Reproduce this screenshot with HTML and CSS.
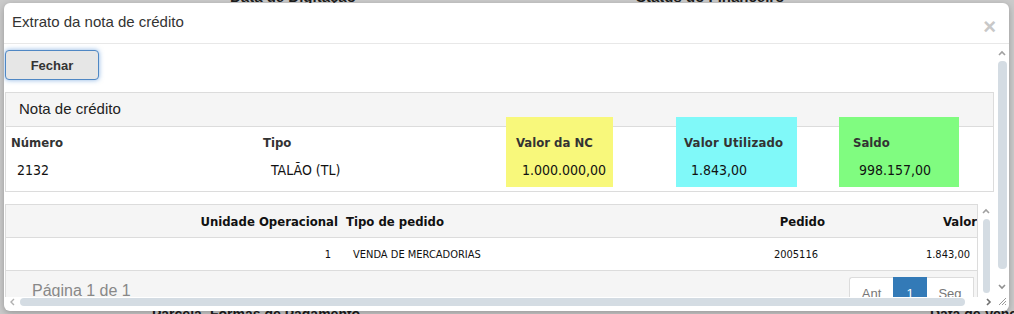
FILE: index.html
```html
<!DOCTYPE html>
<html lang="pt-BR">
<head>
  <meta charset="UTF-8">
  <title>Extrato da nota de crédito</title>
  <link rel="stylesheet" href="styles.css">
</head>
<body>

  <div class="page">
    <div class="page-top">
      <span class="pt-a">Data de Digitação</span>
      <span class="pt-b">Status do Financeiro</span>
    </div>
    <div class="page-bottom">
      <span class="pb-a">Parcela</span>
      <span class="pb-b">Formas de Pagamento</span>
      <span class="pb-c">Data de Venc.</span>
    </div>
  </div>

  <div class="modal">
    <div class="modal-header">
      <span class="modal-title">Extrato da nota de crédito</span>
      <span class="close">&times;</span>
    </div>

    <div class="modal-body">
      <div class="scroll-area">
        <button class="btn-fechar">Fechar</button>

        <div class="panel">
          <div class="panel-heading">Nota de crédito</div>
          <div class="panel-body">
            <div class="field f-numero">
              <div class="label">Número</div>
              <div class="value">2132</div>
            </div>
            <div class="field f-tipo">
              <div class="label">Tipo</div>
              <div class="value">TALÃO (TL)</div>
            </div>
            <div class="field box box-yellow">
              <div class="label">Valor da NC</div>
              <div class="value">1.000.000,00</div>
            </div>
            <div class="field box box-cyan">
              <div class="label">Valor Utilizado</div>
              <div class="value">1.843,00</div>
            </div>
            <div class="field box box-green">
              <div class="label">Saldo</div>
              <div class="value">998.157,00</div>
            </div>
          </div>
        </div>

        <div class="grid-wrap">
          <div class="grid">
            <div class="row head">
              <div class="c1">Unidade Operacional</div>
              <div class="c2">Tipo de pedido</div>
              <div class="c3">Pedido</div>
              <div class="c4">Valor</div>
            </div>
            <div class="row data">
              <div class="c1">1</div>
              <div class="c2">VENDA DE MERCADORIAS</div>
              <div class="c3">2005116</div>
              <div class="c4">1.843,00</div>
            </div>
            <div class="row foot">
              <span class="paging-info">Página 1 de 1</span>
              <div class="pager">
                <span class="pg">Ant</span>
                <span class="pg active">1</span>
                <span class="pg">Seg</span>
              </div>
            </div>
          </div>
          <div class="vscroll inner">
            <svg class="arrow" width="10" height="8" viewBox="0 0 10 8"><polyline points="2,6 5,3 8,6" fill="none" stroke="#a0a0a0" stroke-width="1.6"/></svg>
            <div class="thumb"></div>
          </div>
        </div>
      </div>

      <div class="vscroll outer">
        <svg class="arrow" width="10" height="8" viewBox="0 0 10 8"><polyline points="2,6 5,3 8,6" fill="none" stroke="#a0a0a0" stroke-width="1.6"/></svg>
        <div class="thumb"></div>
        <svg class="arrow down" width="10" height="8" viewBox="0 0 10 8"><polyline points="2,2 5,5 8,2" fill="none" stroke="#909090" stroke-width="1.6"/></svg>
      </div>

      <div class="hscroll">
        <svg class="arrow" width="8" height="10" viewBox="0 0 8 10"><polyline points="6,2 3,5 6,8" fill="none" stroke="#b0b0b0" stroke-width="1.4"/></svg>
        <div class="hthumb"></div>
        <svg class="arrow" width="8" height="10" viewBox="0 0 8 10"><polyline points="2,2 5,5 2,8" fill="none" stroke="#707070" stroke-width="1.6"/></svg>
      </div>
      <div class="corner">
        <svg width="10" height="10" viewBox="0 0 10 10"><path d="M9 2 L2 9 M9 5 L5 9 M9 8 L8 9" stroke="#999" stroke-width="1"/></svg>
      </div>
    </div>
  </div>

</body>
</html>
```

FILE: styles.css
```css
* {
  box-sizing: border-box;
}

html {
  overflow: hidden;
}

body {
  margin: 0;
  width: 1014px;
  height: 314px;
  overflow: hidden;
  background-color: #cacaca;
  font-family: 'Liberation Sans', Arial, sans-serif;
  color: #333;
}

/* page behind the dialog */
.page {
  height: 314px;
  display: flex;
  flex-direction: column;
  justify-content: space-between;
  font-weight: bold;
  font-size: 15px;
  color: #1c1c1c;
  white-space: nowrap;
  overflow: hidden;
}

.page-top {
  display: flex;
  margin-top: -12px;
}

.pt-a {
  margin-left: 230px;
  width: 406px;
}

.page-bottom {
  display: flex;
  line-height: 18px;
  margin-bottom: -9px;
  font-size: 14px;
}

.pb-a {
  margin-left: 152px;
  width: 58px;
  flex-shrink: 0;
}

.pb-b {
  width: 720px;
  flex-shrink: 0;
}

/* dialog */
.modal {
  position: absolute;
  left: 4px;
  top: 3px;
  width: 1005px;
  height: 308px;
  background-color: #fff;
  border-radius: 6px;
  box-shadow: 0 2px 6px rgba(0, 0, 0, 0.25);
  display: flex;
  flex-direction: column;
}

.modal-header {
  height: 41px;
  border-bottom: 1px solid #e8e8e8;
  display: flex;
  align-items: center;
  justify-content: space-between;
  padding: 0 13px 0 8px;
}

.modal-title {
  font-size: 15px;
  color: #333;
  margin-top: -3px;
}

.close {
  font-size: 22px;
  font-weight: bold;
  color: #c8c8c8;
  margin-top: 8px;
}

.modal-body {
  display: grid;
  grid-template-columns: 991px 14px;
  grid-template-rows: 253px 9px;
  padding-bottom: 4px;
}

.scroll-area {
  overflow: hidden;
  padding: 6px 0 0 1px;
}

/* button */
.btn-fechar {
  display: block;
  width: 94px;
  height: 30px;
  font-family: 'Liberation Sans', Arial, sans-serif;
  font-size: 13px;
  font-weight: bold;
  color: #333;
  background-color: #e6e6e6;
  border: 1px solid #4f87c4;
  border-radius: 4px;
  box-shadow: 0 0 5px rgba(60, 130, 210, 0.6);
}

/* panel */
.panel {
  margin-top: 12px;
  width: 989px;
  border: 1px solid #dcdcdc;
}

.panel-heading {
  height: 34px;
  background-color: #f5f5f5;
  border-bottom: 1px solid #dcdcdc;
  font-size: 15px;
  color: #222;
  padding: 7px 0 0 13px;
}

.panel-body {
  height: 64px;
  display: flex;
  font-family: 'DejaVu Sans Condensed', 'DejaVu Sans', sans-serif;
}

.field .label {
  font-size: 13px;
  font-weight: bold;
  color: #333;
}

.field .value {
  font-size: 14px;
  color: #111;
  margin-top: 12px;
}

.f-numero {
  width: 257px;
  padding: 8px 0 0 5px;
}

.f-numero .value {
  padding-left: 6px;
}

.f-tipo {
  width: 243px;
  padding: 8px 0 0 0;
}

.f-tipo .value {
  padding-left: 8px;
}

.box {
  position: relative;
  margin-top: -10px;
  height: 70px;
  padding: 18px 0 0 10px;
}

.box-yellow {
  width: 107px;
  background-color: #f8f87b;
  margin-right: 63px;
}

.box-yellow .value {
  padding-left: 6px;
}

.box-cyan {
  width: 121px;
  background-color: #80f9f9;
  margin-right: 42px;
  padding-left: 8px;
}

.box-cyan .label {
  letter-spacing: 0.2px;
}

.box-cyan .value {
  padding-left: 7px;
}

.box-green {
  width: 120px;
  background-color: #80fc80;
  padding-left: 14px;
}

.box-green .value {
  padding-left: 6px;
}

/* grid */
.grid-wrap {
  margin-top: 12px;
  display: flex;
  gap: 2px;
}

.grid {
  width: 973px;
  height: 93px;
  overflow: hidden;
  border-left: 1px solid #dcdcdc;
  border-right: 1px solid #dcdcdc;
  border-top: 1px solid #dcdcdc;
  font-family: 'DejaVu Sans Condensed', 'DejaVu Sans', sans-serif;
}

.row {
  display: grid;
  grid-template-columns: 335px 360px 130px 160px;
  height: 33px;
  align-items: center;
  border-bottom: 1px solid #dcdcdc;
  width: 985px;
}

.head {
  background-color: #f5f5f5;
  font-size: 13px;
  font-weight: bold;
  color: #111;
}

.head .c1 { text-align: right; padding-right: 3px; }
.head .c2 { padding-left: 5px; }
.head .c3 { text-align: right; padding-right: 6px; }
.head .c4 { text-align: right; padding-right: 14px; }

.data {
  font-size: 11px;
  color: #111;
}

.data .c1 { text-align: right; padding-right: 10px; }
.data .c2 { padding-left: 12px; }
.data .c3 { text-align: right; padding-right: 13px; }
.data .c4 { text-align: right; padding-right: 21px; }

.foot {
  display: flex;
  justify-content: space-between;
  align-items: flex-start;
  background-color: #f5f5f5;
  border-bottom: none;
  height: 40px;
}

.paging-info {
  font-family: 'Liberation Sans', Arial, sans-serif;
  font-size: 16px;
  color: #888;
  margin: 11px 0 0 26px;
}

.pager {
  display: flex;
  margin: 6px 17px 0 0;
  font-family: 'Liberation Sans', Arial, sans-serif;
  font-size: 13px;
  color: #777;
}

.pg {
  height: 32px;
  border: 1px solid #dcdcdc;
  background-color: #fff;
  padding: 8px 0 0 0;
  text-align: center;
}

.pg:first-child {
  width: 44px;
  border-right: none;
  border-radius: 3px 0 0 3px;
}

.pg.active {
  width: 34px;
  background-color: #337ab7;
  border-color: #337ab7;
  color: #fff;
}

.pg:last-child {
  width: 47px;
  border-left: none;
}

/* fake scrollbars */
.vscroll {
  display: flex;
  flex-direction: column;
  align-items: center;
}

.vscroll.outer {
  padding-top: 5px;
}

.vscroll .thumb {
  background-color: #d4dce3;
  border-radius: 4px;
}

.vscroll.outer .thumb {
  width: 9px;
  height: 208px;
  margin-top: 4px;
}

.vscroll.outer .down {
  margin-top: 14px;
}

.vscroll.inner {
  width: 12px;
  padding-top: 3px;
}

.vscroll.inner .thumb {
  width: 7px;
  height: 74px;
  margin-top: 4px;
}

.hscroll {
  display: flex;
  align-items: center;
  padding-left: 4px;
}

.hthumb {
  width: 945px;
  height: 8px;
  margin: 0 20px 0 4px;
  background-color: #d4dce3;
  border-radius: 4px;
}

.corner {
  display: flex;
  align-items: flex-end;
  justify-content: flex-end;
  padding-right: 2px;
}
```
